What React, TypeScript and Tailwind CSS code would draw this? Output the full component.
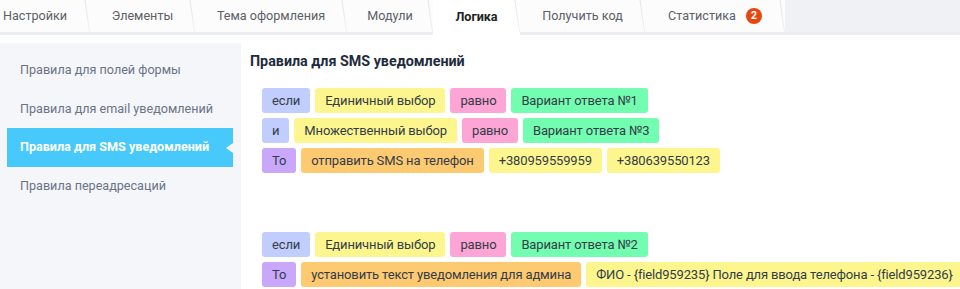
import React from 'react';

type Tab = { label: string; width: string; active?: boolean; badge?: number; pl?: string };

const tabs: Tab[] = [
  { label: 'Настройки', width: 'w-[90px]', pl: 'pl-[3px] justify-start' },
  { label: 'Элементы', width: 'w-[105px]' },
  { label: 'Тема оформления', width: 'w-[152px]' },
  { label: 'Модули', width: 'w-[86px]' },
  { label: 'Логика', width: 'w-[87px]', active: true },
  { label: 'Получить код', width: 'w-[125px]' },
  { label: 'Статистика', width: 'w-[140px]', badge: 2 },
];

const sideItems = [
  'Правила для полей формы',
  'Правила для email уведомлений',
  'Правила для SMS уведомлений',
  'Правила переадресаций',
];

const chipColors: Record<string, string> = {
  blue: 'bg-[#c1cdfd]',
  yellow: 'bg-[#fdf68e]',
  pink: 'bg-[#fda5d4]',
  green: 'bg-[#73fdb0]',
  purple: 'bg-[#c9a8fc]',
  orange: 'bg-[#fdc971]',
};

type Chip = [string, keyof typeof chipColors];

const groups: Chip[][][] = [
  [
    [['если', 'blue'], ['Единичный выбор', 'yellow'], ['равно', 'pink'], ['Вариант ответа №1', 'green']],
    [['и', 'blue'], ['Множественный выбор', 'yellow'], ['равно', 'pink'], ['Вариант ответа №3', 'green']],
    [['То', 'purple'], ['отправить SMS на телефон', 'orange'], ['+380959559959', 'yellow'], ['+380639550123', 'yellow']],
  ],
  [
    [['если', 'blue'], ['Единичный выбор', 'yellow'], ['равно', 'pink'], ['Вариант ответа №2', 'green']],
    [['То', 'purple'], ['установить текст уведомления для админа', 'orange'], ['ФИО - {field959235} Поле для ввода телефона - {field959236}', 'yellow']],
  ],
];

const App: React.FC = () => {
  return (
    <div className="w-[960px] h-[289px] overflow-hidden bg-white font-['Roboto',sans-serif] text-[12.6px]">
      {/* Tabs */}
      <div className="flex h-[35px] bg-[#f0f1f5] border-b-[3px] border-[#ebedf1]">
        {tabs.map((t) => (
          <div
            key={t.label}
            className={`relative flex items-center justify-center shrink-0 ${t.width} ${t.pl ?? ''} ${
              t.active ? 'bg-white h-[35px] font-bold text-[#222]' : 'bg-[#fcfcfd] h-[32px] text-[#5b5f66]'
            }`}
          >
            <span>{t.label}</span>
            {t.badge && (
              <span className="ml-[10px] w-[16px] h-[16px] rounded-full bg-[#e8470c] text-white text-[11px] font-bold flex items-center justify-center">
                {t.badge}
              </span>
            )}
            <span className="absolute right-0 top-0 h-[32px] w-px bg-gradient-to-b from-[#e2e4ea] to-[#eef0f3] skew-x-[8deg] origin-bottom" />
          </div>
        ))}
      </div>

      <div className="flex pt-[8px] h-[254px]">
        {/* Sidebar */}
        <div className="w-[241px] shrink-0 bg-[#f5f6fa] pt-[8px]">
          {sideItems.map((s, i) => {
            const active = i === 2;
            return (
              <div
                key={s}
                className={`relative h-[38.7px] ml-[7px] mr-[8px] pl-[13px] flex items-center whitespace-nowrap ${
                  active ? 'bg-[#47c9fb] text-white font-bold' : 'text-[#6a7386]'
                }`}
              >
                {s}
                {active && (
                  <span className="absolute right-0 top-[15px] w-0 h-0 border-y-[5px] border-y-transparent border-r-[7px] border-r-[#f5f6fa]" />
                )}
              </div>
            );
          })}
        </div>

        {/* Content */}
        <div className="flex-1 pl-[9px] pt-[8px] min-w-0">
          <div className="font-bold text-[14.3px] text-[#1e2b3c] leading-[20px]">Правила для SMS уведомлений</div>
          <div className="pl-[12px] pt-[17px] flex flex-col gap-[59px]">
            {groups.map((g, gi) => (
              <div key={gi} className="flex flex-col gap-[5px]">
                {g.map((row, ri) => (
                  <div key={ri} className="flex gap-[5px] whitespace-nowrap">
                    {row.map(([text, c], ci) => (
                      <span
                        key={ci}
                        className={`h-[25px] px-[10px] flex items-center rounded-[3px] text-[13px] tracking-[-0.15px] text-[#333c48] shrink-0 ${chipColors[c]}`}
                      >
                        {text}
                      </span>
                    ))}
                  </div>
                ))}
              </div>
            ))}
          </div>
        </div>
      </div>
    </div>
  );
};

export default App;
